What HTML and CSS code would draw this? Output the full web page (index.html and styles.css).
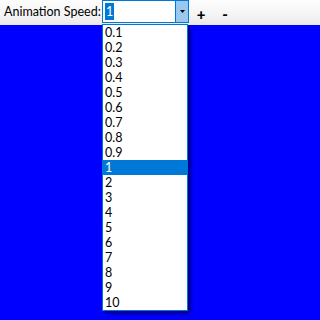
FILE: index.html
```html
<!DOCTYPE html>
<html>
<head>
<meta charset="utf-8">
<link rel="stylesheet" href="styles.css">
</head>
<body>
<div class="toolbar">
  <span class="label">Animation Speed:</span>
  <div class="combo">
    <div class="combo-text"><span class="sel">1</span></div>
    <div class="combo-btn">
      <svg width="5" height="3" viewBox="0 0 5 3"><path d="M0 0H5L2.5 3Z" fill="#000"/></svg>
    </div>
    <ul class="droplist">
      <li>0.1</li><li>0.2</li><li>0.3</li><li>0.4</li><li>0.5</li><li>0.6</li><li>0.7</li><li>0.8</li><li>0.9</li>
      <li class="active">1</li>
      <li>2</li><li>3</li><li>4</li><li>5</li><li>6</li><li>7</li><li>8</li><li>9</li><li>10</li>
    </ul>
  </div>
  <span class="btn">+</span>
  <span class="btn">-</span>
</div>
</body>
</html>
```
FILE: styles.css
```css
html, body {
  margin: 0;
  padding: 0;
  background: #0000ff;
  height: 100%;
}
body {
  font-family: Lato, "Noto Sans", sans-serif;
  font-size: 12.5px;
  color: #000;
}
.toolbar {
  height: 25px;
  display: flex;
  align-items: flex-start;
  background: linear-gradient(#fdfdfd, #f4f4f4 60%, #e9e9e9);
}
.label {
  margin-left: 4px;
  width: 98px;
  line-height: 24px;
}
.combo {
  position: relative;
  width: 87px;
  height: 23px;
  box-sizing: border-box;
  border: 1px solid #0078d7;
  background: #fff;
  display: flex;
}
.combo-text {
  flex: 1;
  padding: 2px 0 0 2px;
  line-height: 17px;
}
.sel {
  display: inline-block;
  background: #0078d7;
  color: #fff;
  padding: 0 1px;
  line-height: 17px;
}
.combo-btn {
  width: 12px;
  background: #99c9ef;
  border-left: 1px solid #0078d7;
  display: flex;
  align-items: center;
  justify-content: center;
}
.combo-btn svg { display: block; }
.droplist {
  position: absolute;
  left: -1px;
  top: 23px;
  width: 86px;
  box-sizing: border-box;
  margin: 0;
  padding: 0;
  list-style: none;
  background: #fff;
  border: 1px solid #0078d7;
  box-shadow: 3px 3px 3px rgba(0, 0, 0, 0.45);
}
.droplist li {
  height: 15px;
  line-height: 15px;
  padding-left: 2px;
}
.droplist li.active {
  background: #0078d7;
  color: #fff;
}
.btn {
  font-weight: 900;
  font-size: 15px;
  line-height: 28px;
  width: 24px;
  text-align: center;
}
```
